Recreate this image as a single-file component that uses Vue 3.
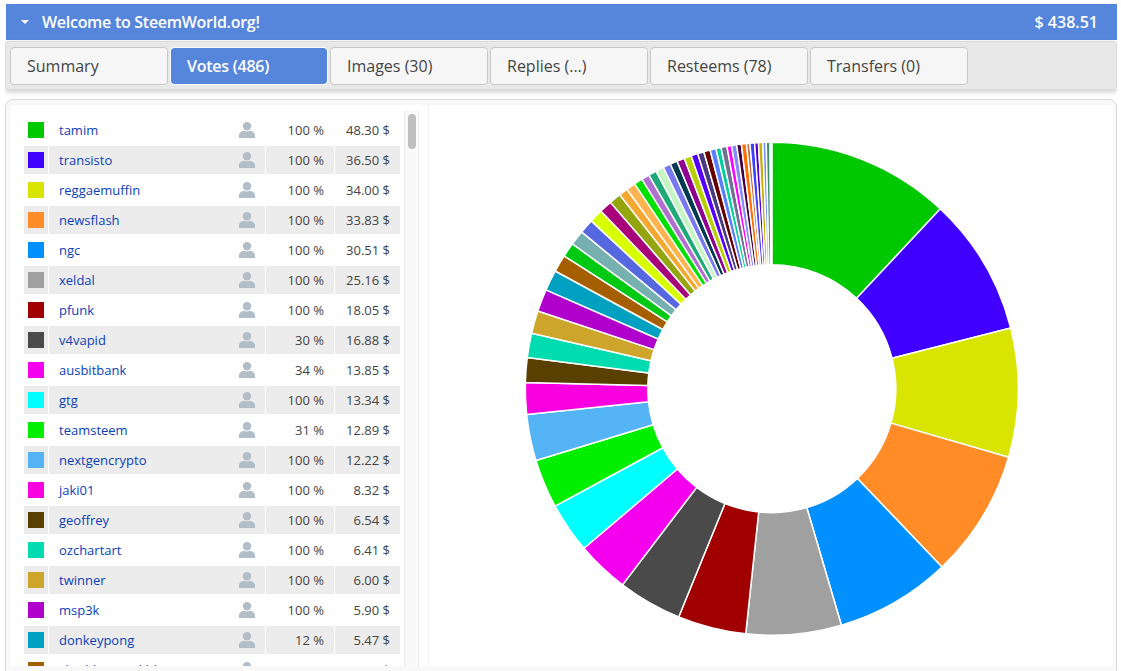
<script setup>
const rows = [
  ['tamim', 100, 48.30, '#00c800'], ['transisto', 100, 36.50, '#4000ff'],
  ['reggaemuffin', 100, 34.00, '#d9e400'], ['newsflash', 100, 33.83, '#ff8c26'],
  ['ngc', 100, 30.51, '#0090ff'], ['xeldal', 100, 25.16, '#a0a0a0'],
  ['pfunk', 100, 18.05, '#a00000'], ['v4vapid', 30, 16.88, '#4a4a4a'],
  ['ausbitbank', 34, 13.85, '#f500ee'], ['gtg', 100, 13.34, '#00ffff'],
  ['teamsteem', 31, 12.89, '#00ee00'], ['nextgencrypto', 100, 12.22, '#55b4f5'],
  ['jaki01', 100, 8.32, '#f800e0'], ['geoffrey', 100, 6.54, '#5a4000'],
  ['ozchartart', 100, 6.41, '#00dcb0'], ['twinner', 100, 6.00, '#cca52a'],
  ['msp3k', 100, 5.90, '#b000cc'], ['donkeypong', 12, 5.47, '#00a0c0'],
  ['shaddowmarkld', 100, 5.04, '#a65f00']
].map(([name, pct, usd, color]) => ({ name, pct, usd, color }))

const tail = [
  [57.4, '#a65f00'], [54, '#00c914'], [50.5, '#76b0b0'], [47.1, '#5568e0'], [43.9, '#d8ff00'],
  [40.9, '#a80078'], [38.1, '#95a510'], [36, '#f5a82f'], [33.8, '#ffb44f'], [31.8, '#00e000'],
  [29.9, '#b070d0'], [28, '#1fa878'], [26.1, '#c5f5c5'], [24.3, '#7878f0'], [22.6, '#003a50'],
  [20.8, '#900090'], [19.1, '#b8d000'], [17.5, '#5500ff'], [16, '#4a3a80'], [14.5, '#660000'],
  [13.1, '#5a80ff'], [11.9, '#00d0a0'], [10.5, '#707090'], [9.4, '#ff00ff'], [8.2, '#8888ff'],
  [7.1, '#400040'], [5.9, '#ff7000'], [5.1, '#c07040'], [4, '#4040ff'], [3.1, '#5000d0'],
  [2.1, '#c8b000'], [1.3, '#7090ff'], [0.4, '#3a9060'], [0, '#a0c0b0']
]

const cx = 342.8
const cy = 283.7
const R = 246.5
const r = 124
const pt = (rad, deg) => {
  const a = (deg * Math.PI) / 180
  return `${(cx + rad * Math.sin(a)).toFixed(2)} ${(cy - rad * Math.cos(a)).toFixed(2)}`
}
const slicePath = (s, e) => {
  const large = e - s > 180 ? 1 : 0
  return `M${pt(R, s)} A${R} ${R} 0 ${large} 1 ${pt(R, e)} L${pt(r, e)} A${r} ${r} 0 ${large} 0 ${pt(r, s)} Z`
}

const slices = []
let at = 0
rows.slice(0, 18).forEach((row) => {
  const end = at + (row.usd / 403) * 360
  slices.push({ d: slicePath(at, end), color: row.color })
  at = end
})
tail.forEach(([ccw, color]) => {
  const end = 360 - ccw
  slices.push({ d: slicePath(at, end), color })
  at = end
})

const tabs = ['Summary', 'Votes (486)', 'Images (30)', 'Replies (...)', 'Resteems (78)', 'Transfers (0)']
</script>

<template>
  <div class="page">
    <header class="welcome">
      <span class="caret"></span>
      <span class="title">Welcome to SteemWorld.org!</span>
      <span class="total">$ 438.51</span>
    </header>
    <nav class="tabs">
      <button v-for="(tab, i) in tabs" :key="tab" class="tab" :class="{ active: i === 1 }">{{ tab }}</button>
    </nav>
    <section class="panel">
      <div class="inner">
        <div class="list">
          <div v-for="(row, i) in rows" :key="row.name" class="row" :class="{ alt: i % 2 === 1 }">
            <div class="cell swatch-cell"><span class="swatch" :style="{ background: row.color }"></span></div>
            <div class="cell name-cell">
              <a class="name">{{ row.name }}</a>
              <svg class="user" viewBox="0 0 16 16" width="16" height="16">
                <circle cx="8" cy="4.2" r="4.2" fill="#b1bec8" />
                <path d="M0 16 V13.2 C0 10.6 2.6 9.4 5 8.8 C6.5 9.6 9.5 9.6 11 8.8 C13.4 9.4 16 10.6 16 13.2 V16 Z" fill="#b1bec8" />
              </svg>
            </div>
            <div class="cell num">{{ row.pct }} %</div>
            <div class="cell num">{{ row.usd.toFixed(2) }} $</div>
          </div>
        </div>
        <div class="track"><div class="thumb"></div></div>
        <div class="chart">
          <svg width="684" height="561" viewBox="0 0 684 561">
            <path v-for="(s, i) in slices" :key="i" :d="s.d" :fill="s.color" stroke="#fff" stroke-width="1.5" stroke-linejoin="round" />
          </svg>
        </div>
      </div>
    </section>
  </div>
</template>

<style scoped>
.page {
  width: 1112px;
  height: 670px;
  margin-left: 5px;
  padding-top: 3px;
  font-family: "Open Sans", "Noto Sans", sans-serif;
  color: #444;
  overflow: hidden;
}
.welcome {
  display: flex;
  align-items: center;
  height: 36px;
  margin-top: 1px;
  margin-left: 1px;
  padding: 0 19px 0 15px;
  background: #5686dc;
  color: #fff;
  font-size: 16px;
  font-weight: 600;
  letter-spacing: -0.28px;
}
.caret {
  width: 0;
  height: 0;
  margin-right: 13px;
  border-left: 4px solid transparent;
  border-right: 4px solid transparent;
  border-top: 4px solid #fff;
}
.total {
  margin-left: auto;
  letter-spacing: 0;
}
.tabs {
  display: flex;
  gap: 2px;
  height: 49px;
  box-sizing: border-box;
  margin-top: 1px;
  padding: 5px 4px;
  background: #e8e8e8;
  border: 1px solid #dcdcdc;
  border-radius: 3px;
  box-shadow: 0 2px 5px rgba(0, 0, 0, 0.2);
}
.tab {
  width: 158px;
  height: 38px;
  padding: 0 0 0 16px;
  box-sizing: border-box;
  text-align: left;
  background: #f6f6f6;
  border: 1px solid #c9c9c9;
  border-radius: 4px;
  color: #454545;
  font: 400 16px "Open Sans", "Noto Sans", sans-serif;
}
.tab.active {
  background: #5686dc;
  background-clip: padding-box;
  border-color: #fafafa;
  color: #fff;
  font-weight: 600;
  letter-spacing: -0.25px;
}
.panel {
  margin-top: 9px;
  height: 600px;
  box-sizing: border-box;
  padding: 5px 3px 0 4px;
  background: #f8f8f8;
  border: 1px solid #d8d8d8;
  border-radius: 8px 8px 0 0;
}
.inner {
  display: flex;
  align-items: flex-start;
  height: 561px;
  background: #fff;
  overflow: hidden;
}
.list {
  flex: none;
  width: 376px;
  height: 550px;
  margin: 11px 0 0 14px;
  overflow: hidden;
}
.row {
  display: grid;
  grid-template-columns: 24px 216px 68px 65px;
  column-gap: 1px;
  height: 28px;
  margin-bottom: 2px;
  font-size: 13px;
  line-height: 28px;
}
.alt .cell {
  background: #ececec;
}
.swatch-cell {
  padding: 6px 0 0 4px;
  box-sizing: border-box;
}
.swatch {
  display: block;
  width: 16px;
  height: 16px;
}
.name-cell {
  display: flex;
  align-items: center;
  justify-content: space-between;
  padding: 0 10px;
}
.name {
  color: #0b3fb8;
}
.user {
  flex: none;
}
.num {
  padding-right: 10px;
  text-align: right;
  color: #444;
}
.track {
  flex: none;
  box-sizing: border-box;
  width: 15px;
  height: 555px;
  margin: 6px 0 0 4px;
  padding: 3px 3px 0 3px;
  background: #f9f9f9;
  border-left: 1px solid #ececec;
  border-right: 1px solid #ececec;
}
.thumb {
  width: 8px;
  height: 35px;
  background: #bfbfbf;
  border-radius: 4px;
}
.chart {
  flex: none;
  width: 684px;
  height: 561px;
  margin-left: 10px;
  box-shadow: -1px 0 0 #f2f2f2;
}
.chart svg {
  display: block;
}
</style>

<style>
html, body {
  overflow: hidden;
  background: #fff;
}
</style>
